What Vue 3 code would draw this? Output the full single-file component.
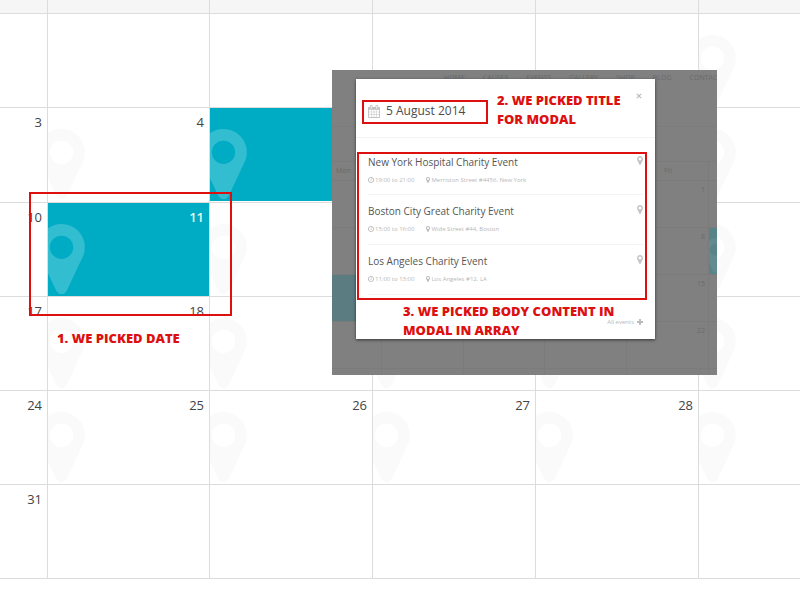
<script setup>
const pin = 'M768 640q0-106-75-181t-181-75-181 75-75 181 75 181 181 75 181-75 75-181zm256 0q0 109-33 179l-364 774q-16 33-47.5 52t-67.5 19-67.5-19-46.5-52l-365-774q-33-70-33-179 0-212 150-362t362-150 362 150 150 362z'
const clock = 'M1024 544v448q0 14-9 23t-23 9h-320q-14 0-23-9t-9-23v-64q0-14 9-23t23-9h224v-352q0-14 9-23t23-9h64q14 0 23 9t9 23zm416 352q0-148-73-273t-198-198-273-73-273 73-198 198-73 273 73 273 198 198 273 73 273-73 198-198 73-273zm224 0q0 209-103 385.5t-279.5 279.5-385.5 103-385.5-103-279.5-279.5-103-385.5 103-385.5 279.5-279.5 385.5-103 385.5 103 279.5 279.5 103 385.5z'
const calendar = 'M192 1664h288v-288h-288v288zm352 0h320v-288h-320v288zm-352-352h288v-320h-288v320zm352 0h320v-320h-320v320zm-352-384h288v-288h-288v288zm736 736h320v-288h-320v288zm-384-736h320v-288h-320v288zm768 736h288v-288h-288v288zm-384-352h320v-320h-320v320zm-352-864v-288q0-13-9.5-22.5t-22.5-9.5h-64q-13 0-22.5 9.5t-9.5 22.5v288q0 13 9.5 22.5t22.5 9.5h64q13 0 22.5-9.5t9.5-22.5zm736 864h288v-320h-288v320zm-384-384h320v-288h-320v288zm384 0h288v-288h-288v288zm32-480v-288q0-13-9.5-22.5t-22.5-9.5h-64q-13 0-22.5 9.5t-9.5 22.5v288q0 13 9.5 22.5t22.5 9.5h64q13 0 22.5-9.5t9.5-22.5zm384-64v1280q0 52-38 90t-90 38h-1408q-52 0-90-38t-38-90v-1280q0-52 38-90t90-38h128v-96q0-66 47-113t113-47h64q66 0 113 47t47 113v96h384v-96q0-66 47-113t113-47h64q66 0 113 47t47 113v96h128q52 0 90 38t38 90z'

// Each cell: day number, pin marker, highlighted state
const cell = (day, marked = false, active = false) => ({ day, marked, active })
const weeks = [
  [cell(''), cell(''), cell(''), cell(''), cell(''), cell('', true)],
  [cell('3'), cell('4', true), cell('', true, true), cell(''), cell(''), cell('', true)],
  [cell('10'), cell('11', true, true), cell('', true), cell(''), cell(''), cell('', true)],
  [cell('17'), cell('18', true), cell('', true), cell('', true), cell('', true), cell('', true)],
  [cell('24'), cell('25', true), cell('26', true), cell('27', true), cell('28', true), cell('', true)],
  [cell('31'), cell(''), cell(''), cell(''), cell(''), cell('')],
]

const events = [
  { title: 'New York Hospital Charity Event', time: '19:00 to 21:00', place: 'Merriston Street #4456, New York' },
  { title: 'Boston City Great Charity Event', time: '15:00 to 16:00', place: 'Wide Street #44, Boston' },
  { title: 'Los Angeles Charity Event', time: '11:00 to 13:00', place: 'Los Angeles #12, LA' },
]

const nav = ['HOME', 'CAUSES', 'EVENTS', 'GALLERY', 'SHOP', 'BLOG', 'CONTACT']
const dimWeeks = [
  { day: '1' },
  { day: '8', last: true },
  { day: '15', first: true },
  { day: '22' },
]
</script>

<template>
  <main class="page">
    <table class="calendar">
      <thead>
        <tr><th v-for="n in 6" :key="n"></th></tr>
      </thead>
      <tbody>
        <tr v-for="(week, w) in weeks" :key="w">
          <td v-for="(c, i) in week" :key="i">
            <div class="day" :class="{ active: c.active }">
              <svg v-if="c.marked" class="marker" viewBox="0 128 1024 1536"><path :d="pin" /></svg>
              <span>{{ c.day }}</span>
            </div>
          </td>
        </tr>
      </tbody>
    </table>

    <section class="overlay">
      <div class="dimmed">
        <nav class="dim-nav"><a v-for="n in nav" :key="n" href="#">{{ n }}</a></nav>
        <div class="dim-band"></div>
        <div class="dim-row dim-head"><b>Mon</b><b></b><b></b><b></b><b class="fri">Fri</b><b></b></div>
        <div v-for="d in dimWeeks" :key="d.day" class="dim-row">
          <i :class="{ teal: d.first }"></i><i></i><i></i><i></i><i>{{ d.day }}</i><i :class="{ teal: d.last }"><svg v-if="d.last" class="dim-pin" viewBox="0 128 1024 1536"><path :d="pin" /></svg></i>
        </div>
        <div class="dim-row"><i></i><i></i><i></i><i></i><i></i><i></i></div>
      </div>

      <article class="modal">
        <header class="modal-head">
          <svg class="cal-icon" viewBox="64 0 1664 1792"><path :d="calendar" /></svg>
          <h2>5 August 2014</h2>
          <button class="close" type="button" aria-label="Close">
            <svg viewBox="0 0 10 10"><path d="M1.5 1.5L8.5 8.5M8.5 1.5L1.5 8.5" /></svg>
          </button>
        </header>
        <ul class="events">
          <li v-for="e in events" :key="e.title">
            <div>
              <h3>{{ e.title }}</h3>
              <p class="meta">
                <span class="time"><svg class="clock" viewBox="128 128 1536 1536"><path :d="clock" /></svg>{{ e.time }}</span>
                <span class="place"><svg class="spot" viewBox="0 128 1024 1536"><path :d="pin" /></svg>{{ e.place }}</span>
              </p>
            </div>
            <svg class="event-pin" viewBox="0 128 1024 1536"><path :d="pin" /></svg>
          </li>
        </ul>
        <footer class="modal-foot">
          <a href="#">All events <svg viewBox="0 0 10 10"><path d="M5 0V10M0 5H10" /></svg></a>
        </footer>
      </article>
    </section>

    <div class="frame frame-date"></div>
    <p class="note note-date">1. WE PICKED DATE</p>
    <div class="frame frame-title"></div>
    <p class="note note-title">2. WE PICKED TITLE<br>FOR MODAL</p>
    <div class="frame frame-body"></div>
    <p class="note note-body">3. WE PICKED BODY CONTENT IN<br>MODAL IN ARRAY</p>
  </main>
</template>

<style>
body {
  margin: 0;
  background: #fff;
}
</style>

<style scoped>
.page {
  position: relative;
  overflow: hidden;
  padding-bottom: 20px;
  font-family: "Open Sans", "Noto Sans", sans-serif;
  color: #444;
}
h2, h3, p, ul { margin: 0; padding: 0; font-weight: 400; }
a { color: inherit; text-decoration: none; }

.calendar, thead, tbody { display: block; }
.calendar tr {
  display: grid;
  grid-template-columns: 48fr 162fr 163fr 163fr 163fr 101fr;
}
th, td {
  padding: 0;
  border-right: 1px solid #dcdcdc;
  border-bottom: 1px solid #dcdcdc;
}
th:last-child, td:last-child { border-right: 0; }
th { height: 13px; background: #f6f6f6; }
tbody tr:nth-child(2) td { padding-bottom: 1px; }
.day {
  position: relative;
  overflow: hidden;
  box-sizing: border-box;
  height: 93px;
  padding: 5px 5px 0 0;
  font-size: 13px;
  line-height: 18px;
  text-align: right;
}
.day.active {
  background: #00acc4;
  color: #e2f6ee;
  font-weight: 600;
}
.marker {
  position: absolute;
  left: -10px;
  top: 21px;
  width: 47px;
  height: 70px;
  fill: #fafafa;
}
.active .marker { fill: #33bdd0; }

.overlay {
  position: absolute;
  left: 332px;
  top: 70px;
  box-sizing: border-box;
  width: 385px;
  height: 305px;
  padding: 9px 62px 36px 24px;
  overflow: hidden;
  background: #808080;
}
.dimmed {
  position: absolute;
  inset: 0;
  font-size: 7px;
  line-height: 10px;
  color: #6a6a6a;
}
.dim-nav {
  display: flex;
  gap: 18px;
  height: 52px;
  padding: 4px 0 0 112px;
  border-bottom: 1px solid #7c7c7c;
  text-rendering: geometricPrecision;
}
.dim-band { height: 34px; border-bottom: 1px solid #7b7b7b; }
.dim-row {
  display: grid;
  grid-template-columns: 50fr 82fr 81fr 82fr 82fr 8fr;
  height: 46px;
  border-bottom: 1px solid #7b7b7b;
}
.dim-row b, .dim-row i {
  overflow: hidden;
  padding: 4px 3px 0 4px;
  border-right: 1px solid #7b7b7b;
  font-style: normal;
  font-weight: 400;
  text-align: right;
}
.dim-row > :last-child { padding: 0; border-right: 0; }
.dim-head { height: 18px; }
.dim-head b { text-align: left; }
.dim-head .fri { text-align: center; }
.dim-row .teal { background: #5b7c81; }
.dim-row .teal:last-child { background: #578389; }
.dim-pin { display: block; width: 23px; height: 35px; margin: 10px 0 0 -5px; fill: #628b91; }

.modal {
  position: relative;
  display: flex;
  flex-direction: column;
  height: 260px;
  background: #fff;
  box-shadow: 0 1px 3px rgba(0, 0, 0, 0.6);
}
.modal-head {
  display: flex;
  align-items: center;
  box-sizing: border-box;
  height: 59px;
  padding: 6px 12px 0;
  border-bottom: 1px solid #f2f2f2;
}
.cal-icon { width: 12px; height: 13px; fill: #c2c2c2; }
.modal-head h2 {
  flex: 1;
  margin-left: 6px;
  font-size: 12px;
  line-height: 18px;
  color: #4c4c4c;
}
.close {
  align-self: flex-start;
  width: 8px;
  height: 8px;
  margin-top: 7px;
  padding: 0;
  border: 0;
  background: none;
}
.close svg { display: block; width: 6px; height: 6px; margin: 1px; stroke: #bbb; stroke-width: 2; }
.events { padding: 16px 12px 0; list-style: none; }
.events li {
  display: flex;
  justify-content: space-between;
  box-sizing: border-box;
  height: 50px;
  padding-top: 8px;
  border-bottom: 1px solid #f4f4f4;
}
.events li:first-child { height: 41px; padding-top: 0; }
h3 { font-size: 10px; line-height: 16px; color: #555; }
.meta {
  display: flex;
  gap: 12px;
  margin-top: 6px;
  font-size: 6px;
  line-height: 8px;
  color: #b8b8b8;
}
.time, .place { display: flex; align-items: center; gap: 1px; }
.clock { width: 6px; height: 6px; fill: #bbb; }
.spot { width: 4px; height: 6px; fill: #bbb; }
.event-pin { width: 6px; height: 9px; margin-top: 2px; fill: #c4c4c4; }
.modal-foot {
  margin-top: auto;
  padding: 0 12px 12px;
  font-size: 6px;
  line-height: 10px;
  text-align: right;
  color: #b8b8b8;
}
.modal-foot a { display: inline-flex; align-items: center; gap: 3px; }
.modal-foot svg { width: 6px; height: 6px; stroke: #bbb; stroke-width: 3; }

.frame {
  position: absolute;
  box-sizing: border-box;
  border: 2px solid #dd1010;
}
.frame-date { left: 29px; top: 192px; width: 203px; height: 124px; }
.frame-title { left: 362px; top: 100px; width: 126px; height: 24px; }
.frame-body { left: 357px; top: 152px; width: 290px; height: 148px; }
.note {
  position: absolute;
  font-size: 13px;
  line-height: 19px;
  font-weight: 800;
  white-space: nowrap;
  color: #dd1010;
}
.note-date { left: 57px; top: 329px; }
.note-title { left: 497px; top: 91px; }
.note-body { left: 403px; top: 302px; }
</style>
